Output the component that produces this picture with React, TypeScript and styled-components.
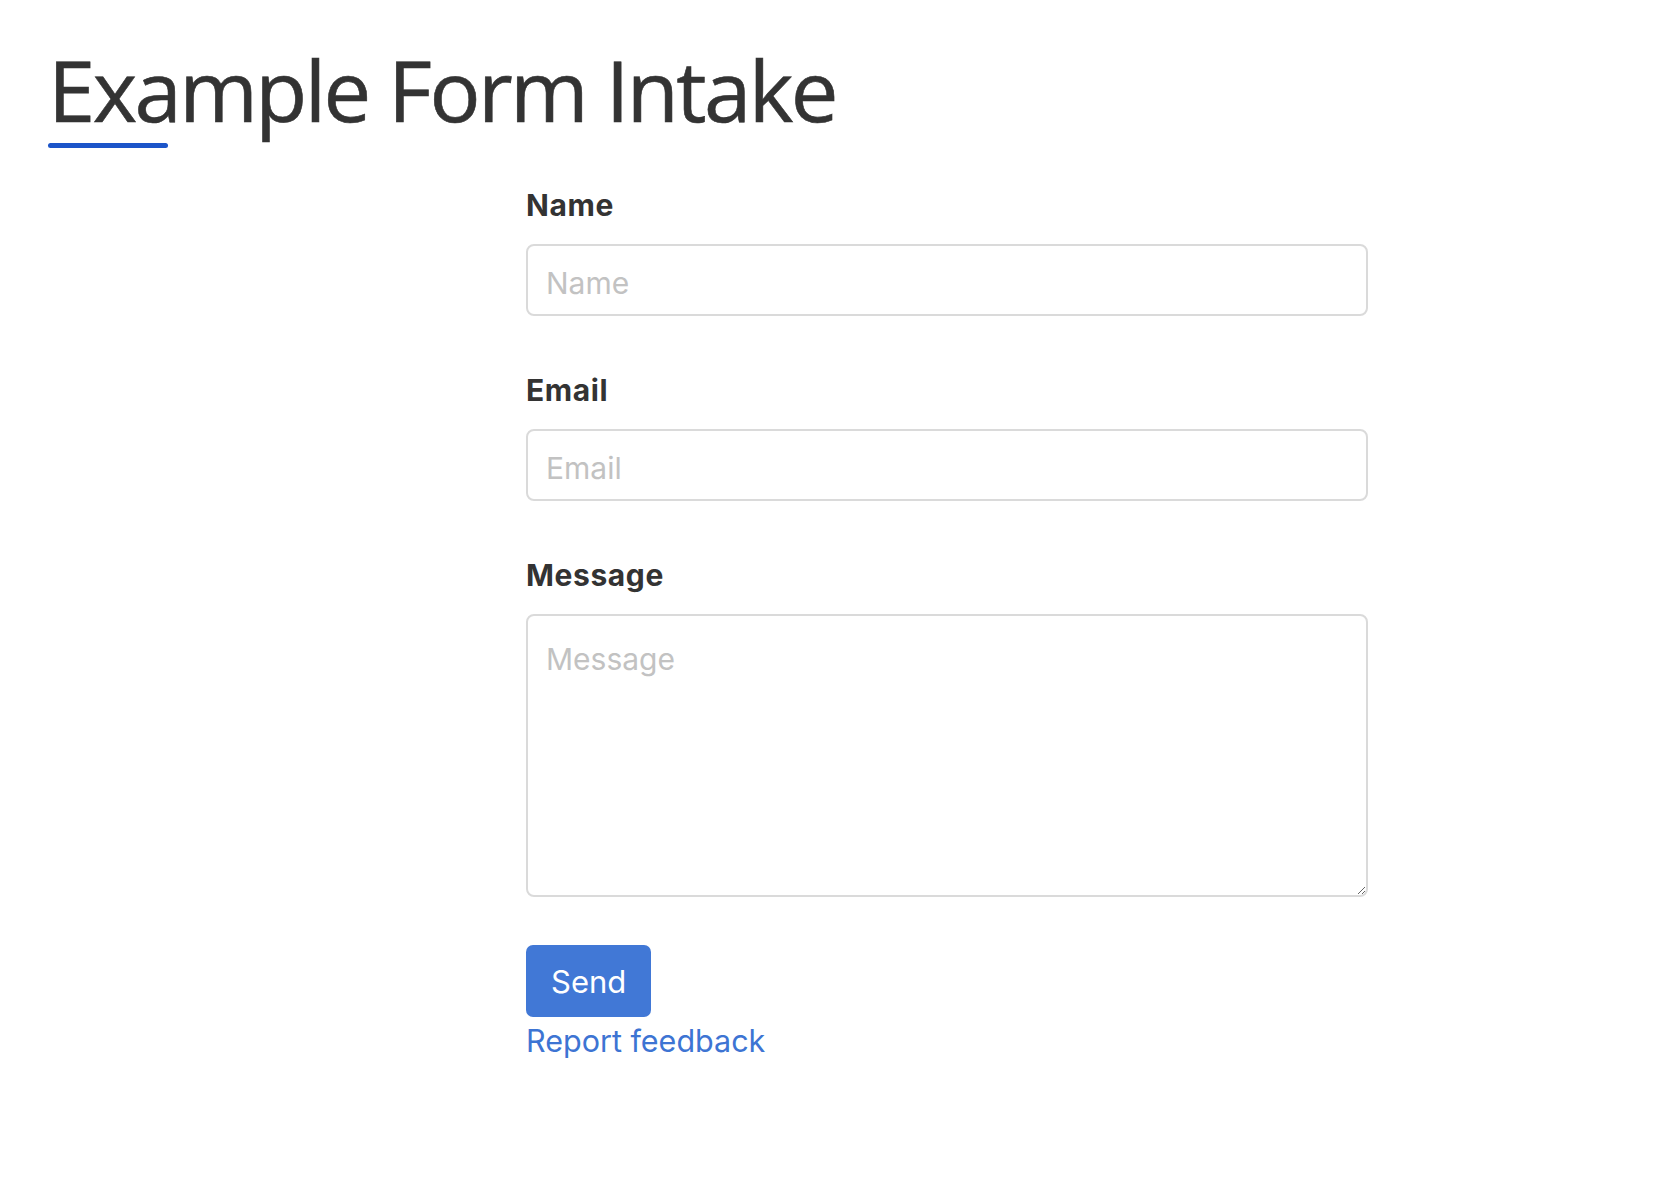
import React from 'react';
import styled, { createGlobalStyle } from 'styled-components';

const GlobalStyle = createGlobalStyle`
  html, body {
    margin: 0;
    padding: 0;
    background: #ffffff;
  }
  body {
    font-family: Inter, "Liberation Sans", sans-serif;
    color: #333333;
  }
  * {
    box-sizing: border-box;
  }
`;

const Page = styled.main`
  padding: 38px 48px 80px;
`;

const Header = styled.header`
  display: flex;
  flex-direction: column;
  align-items: flex-start;
`;

const Title = styled.h1`
  margin: 0;
  font-family: "Open Sans", "Noto Sans", sans-serif;
  font-weight: 400;
  font-size: 85px;
  line-height: 102px;
  letter-spacing: -2.6px;
  color: #333333;
  -webkit-text-stroke: 0.6px #333333;
`;

const TitleBar = styled.div`
  width: 120px;
  height: 5px;
  margin-top: 3px;
  border-radius: 3px;
  background-color: #1c55c9;
`;

const Form = styled.form`
  width: 842px;
  margin: 40px 0 0 478px;
  display: flex;
  flex-direction: column;
`;

const Field = styled.div<{ $last?: boolean }>`
  display: flex;
  flex-direction: column;
  gap: 22px;
  margin-bottom: ${(props) => (props.$last ? '48px' : '57px')};
`;

const Label = styled.label`
  font-weight: 700;
  font-size: 30px;
  line-height: 34px;
  letter-spacing: 0.6px;
  color: #333333;
`;

const inputBase = `
  width: 100%;
  border: 2px solid #dadada;
  border-radius: 8px;
  background: #ffffff;
  font-family: Inter, "Liberation Sans", sans-serif;
  font-size: 30px;
  color: #333333;
  outline: none;
  &::placeholder {
    color: #c2c2c2;
  }
`;

const TextInput = styled.input`
  ${inputBase}
  height: 72px;
  padding: 5px 18px 0;
`;

const TextArea = styled.textarea`
  ${inputBase}
  height: 283px;
  padding: 25px 18px;
  line-height: 36px;
  resize: vertical;
`;

const Actions = styled.div`
  display: flex;
  flex-direction: column;
  align-items: flex-start;
  gap: 6px;
`;

const SendButton = styled.button`
  height: 72px;
  padding: 0 25px;
  border: none;
  border-radius: 7px;
  background-color: #4178d6;
  color: #ffffff;
  font-family: Inter, "Liberation Sans", sans-serif;
  font-size: 31px;
  cursor: pointer;
`;

const FeedbackLink = styled.a`
  font-size: 30.5px;
  line-height: 36px;
  color: #3d74d3;
  text-decoration: none;
`;

const App = () => {
  return (
    <>
      <GlobalStyle />
      <Page>
        <Header>
          <Title>Example Form Intake</Title>
          <TitleBar />
        </Header>
        <Form onSubmit={(e) => e.preventDefault()}>
          <Field>
            <Label htmlFor="name">Name</Label>
            <TextInput id="name" type="text" placeholder="Name" />
          </Field>
          <Field>
            <Label htmlFor="email">Email</Label>
            <TextInput id="email" type="email" placeholder="Email" />
          </Field>
          <Field $last>
            <Label htmlFor="message">Message</Label>
            <TextArea id="message" placeholder="Message" />
          </Field>
          <Actions>
            <SendButton type="submit">Send</SendButton>
            <FeedbackLink href="#">Report feedback</FeedbackLink>
          </Actions>
        </Form>
      </Page>
    </>
  );
};

export default App;
